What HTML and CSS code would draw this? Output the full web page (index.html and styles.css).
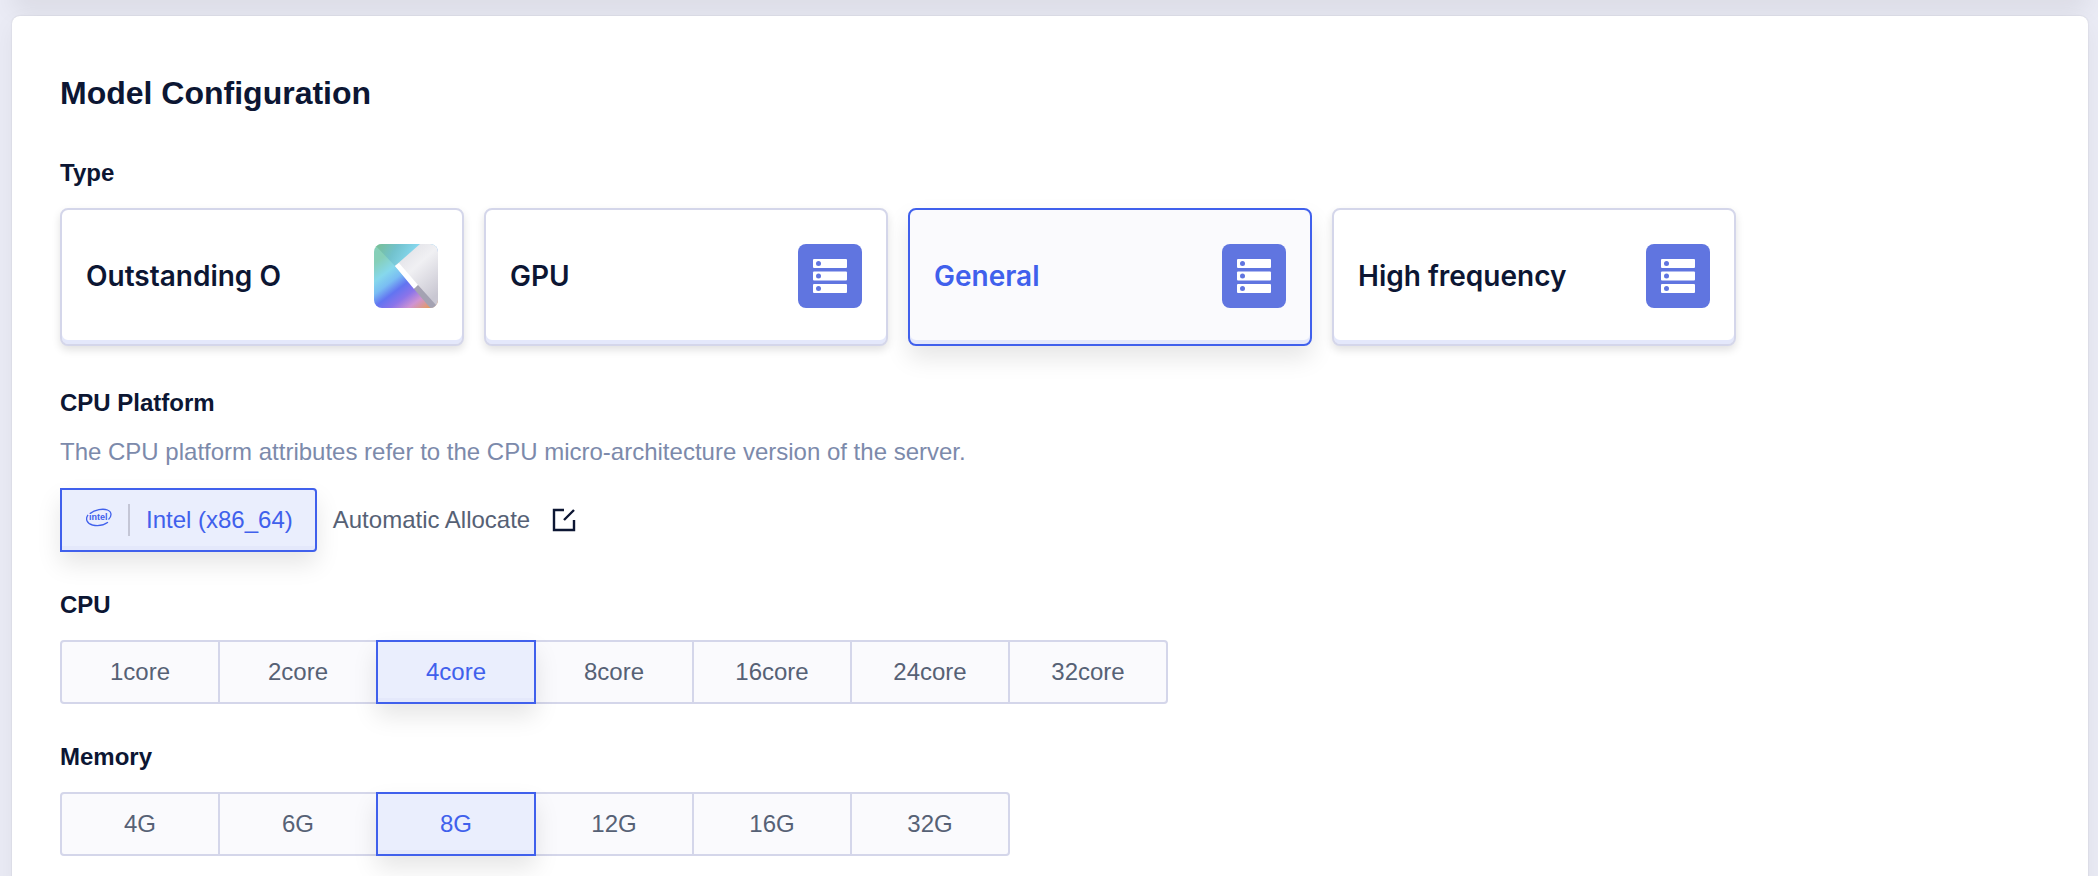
FILE: index.html
```html
<!DOCTYPE html>
<html lang="en">
<head>
<meta charset="utf-8">
<title>Model Configuration</title>
<link rel="stylesheet" href="styles.css">
</head>
<body>
<svg width="0" height="0" class="defs" aria-hidden="true">
  <symbol id="server" viewBox="0 0 64 64">
    <rect width="64" height="64" rx="8" fill="#6075e0"/>
    <g fill="#fff">
      <rect x="15" y="15" width="34" height="9" rx="1"/>
      <rect x="15" y="27.500" width="34" height="9" rx="1"/>
      <rect x="15" y="40" width="34" height="9" rx="1"/>
    </g>
    <g fill="#6075e0">
      <circle cx="20.500" cy="19.500" r="2.500"/>
      <circle cx="20.500" cy="32" r="2.500"/>
      <circle cx="20.500" cy="44.500" r="2.500"/>
    </g>
  </symbol>
</svg>
<div class="previous-panel"></div>
<main class="panel">
  <h1 class="title">Model Configuration</h1>

  <section class="group group-types">
    <h2 class="label">Type</h2>
    <div class="types">
      <button class="type" type="button">Outstanding O
        <svg class="type-icon" viewBox="0 0 64 64" aria-hidden="true">
          <defs>
            <clipPath id="tile"><rect width="64" height="64" rx="8"/></clipPath>
            <linearGradient id="spectrum" gradientUnits="userSpaceOnUse" x1="2" y1="18" x2="46" y2="76">
              <stop offset="0" stop-color="#86cfb8"/>
              <stop offset=".2" stop-color="#86d8ec"/>
              <stop offset=".34" stop-color="#79bdf3"/>
              <stop offset=".48" stop-color="#6274f1"/>
              <stop offset=".62" stop-color="#8a74ea"/>
              <stop offset=".77" stop-color="#cf93d2"/>
              <stop offset=".94" stop-color="#e39a62"/>
            </linearGradient>
            <linearGradient id="sky" gradientUnits="userSpaceOnUse" x1="4" y1="0" x2="34" y2="18">
              <stop offset="0" stop-color="#78bf97"/>
              <stop offset=".5" stop-color="#72c2cd"/>
              <stop offset="1" stop-color="#86d7ee"/>
            </linearGradient>
            <linearGradient id="silver" gradientUnits="userSpaceOnUse" x1="30" y1="8" x2="66" y2="48">
              <stop offset="0" stop-color="#e3e3e8"/>
              <stop offset=".35" stop-color="#f0f0f3"/>
              <stop offset="1" stop-color="#c9c7d2"/>
            </linearGradient>
          </defs>
          <g clip-path="url(#tile)">
            <rect width="64" height="64" fill="url(#spectrum)"/>
            <path d="M0 0H47L21 22Z" fill="url(#sky)"/>
            <path d="M46 0H64V64H58L21 22Z" fill="url(#silver)"/>
            <path d="M21 22L25 19L44 41L40 45Z" fill="#fff"/>
            <path d="M44 41L62 61L58 66L40 45Z" fill="#a4a2b2"/>
          </g>
        </svg>
      </button>
      <button class="type" type="button">GPU
        <svg class="type-icon" aria-hidden="true"><use href="#server"/></svg>
      </button>
      <button class="type type-selected" type="button" aria-pressed="true">General
        <svg class="type-icon" aria-hidden="true"><use href="#server"/></svg>
      </button>
      <button class="type" type="button">High frequency
        <svg class="type-icon" aria-hidden="true"><use href="#server"/></svg>
      </button>
    </div>
  </section>

  <section class="group">
    <h2 class="label">CPU Platform</h2>
    <p class="hint">The CPU platform attributes refer to the CPU micro-architecture version of the server.</p>
    <div class="platforms">
      <button class="platform" type="button" aria-pressed="true">
        <svg class="intel" viewBox="0 0 26 24" aria-hidden="true">
          <path d="M4 5.500C9 1.500 17 .4 21.500 2C26.500 4 25.500 9 22.500 11.500M2 6.800C-1 11 1 15.500 6.500 17C12 18.300 18 17 22 14.200" fill="none" stroke="#4060ec" stroke-width="1.300"/>
          <text x="3" y="12" class="intel-word">intel</text>
        </svg>
        <span class="platform-name">Intel (x86_64)</span>
      </button>
      <span class="allocate">Automatic Allocate</span>
      <button class="edit" type="button" aria-label="Edit platform">
        <svg class="edit-icon" viewBox="0 0 24 24" aria-hidden="true">
          <path d="M12 2H2V22H22V12M12 12L22 2" fill="none" stroke="#0c1633" stroke-width="2.400"/>
        </svg>
      </button>
    </div>
  </section>

  <section class="group">
    <h2 class="label">CPU</h2>
    <div class="options">
      <button class="option" type="button">1core</button>
      <button class="option" type="button">2core</button>
      <button class="option option-selected" type="button" aria-pressed="true">4core</button>
      <button class="option" type="button">8core</button>
      <button class="option" type="button">16core</button>
      <button class="option" type="button">24core</button>
      <button class="option" type="button">32core</button>
    </div>
  </section>

  <section class="group">
    <h2 class="label">Memory</h2>
    <div class="options">
      <button class="option" type="button">4G</button>
      <button class="option" type="button">6G</button>
      <button class="option option-selected" type="button" aria-pressed="true">8G</button>
      <button class="option" type="button">12G</button>
      <button class="option" type="button">16G</button>
      <button class="option" type="button">32G</button>
    </div>
  </section>
</main>
</body>
</html>
```
FILE: styles.css
```css
* {
  box-sizing: border-box;
}

html {
  height: 100%;
  overflow: hidden;
}

body {
  margin: 0;
  height: 100%;
  padding: 0 10px 0 12px;
  overflow: hidden;
  background: #eaebf5;
  color: #0c1633;
  font-family: "Liberation Sans", Arial, sans-serif;
  font-size: 24px;
  line-height: 32px;
}

button {
  font: inherit;
  color: inherit;
  cursor: pointer;
}

.defs {
  position: absolute;
}

.previous-panel {
  height: 20px;
  margin-top: -20px;
  border-radius: 8px;
  background: #fff;
  box-shadow: 0 8px 24px rgba(0, 0, 0, 0.09);
}

.panel {
  margin-top: 16px;
  min-height: 100%;
  padding: 56px 48px 0;
  border-radius: 8px;
  background: #fff;
  box-shadow: 0 0 2px rgba(0, 0, 0, 0.12), 0 8px 24px rgba(0, 0, 0, 0.05);
}

.title {
  margin: 0 0 42px;
  font-size: 32px;
  line-height: 42px;
}

.group {
  margin-bottom: 36px;
}

.group-types {
  margin-bottom: 40px;
}

.group:last-child {
  margin-bottom: 0;
}

.label {
  margin: 0 0 18px;
  font-size: 24px;
  line-height: 34px;
}

.types {
  display: flex;
  gap: 20px;
}

.type {
  display: flex;
  align-items: center;
  justify-content: space-between;
  width: 404px;
  height: 138px;
  padding: 0 24px 2px;
  border: 2px solid #d4d6ea;
  border-radius: 8px;
  background: #fff;
  box-shadow: inset 0 -4px #e4e8fb, 0 4px 8px rgba(0, 0, 0, 0.12);
  font-family: Inter, sans-serif;
  font-size: 28px;
  font-weight: 600;
}

.type-selected {
  border-color: #4060ec;
  background: #fafafd;
  box-shadow: inset 0 -4px #e4e8fb, 0 12px 24px rgba(0, 0, 0, 0.1);
  color: #4060ec;
}

.type-icon {
  width: 64px;
  height: 64px;
}

.hint {
  margin: 0 0 22px;
  color: #7c8aab;
  line-height: 28px;
}

.platforms {
  display: flex;
  align-items: center;
}

.platform {
  display: flex;
  align-items: center;
  height: 64px;
  padding: 0 22px 0 24px;
  border: 2px solid #4060ec;
  border-radius: 0 4px 4px 0;
  background: #eaeefd;
  box-shadow: inset 0 -4px #e4e8fb, 0 12px 24px rgba(0, 0, 0, 0.1);
  color: #4060ec;
}

.intel {
  width: 26px;
  height: 24px;
}

.intel-word {
  fill: #4060ec;
  font-size: 9px;
  font-weight: 700;
}

.platform-name {
  margin-left: 16px;
  padding-left: 16px;
  border-left: 2px solid #c4c6d6;
}

.allocate {
  margin-left: 16px;
  color: #566175;
}

.edit {
  display: flex;
  margin-left: 22px;
  padding: 0;
  border: 0;
  background: none;
}

.edit-icon {
  width: 24px;
  height: 24px;
}

.options {
  display: flex;
}

.option {
  width: 160px;
  height: 64px;
  padding: 0;
  border: 2px solid #d4d6ea;
  background: #fafafd;
  color: #566175;
}

.option + .option {
  margin-left: -2px;
}

.option:first-child {
  border-radius: 4px 0 0 4px;
}

.option:last-child {
  border-radius: 0 4px 4px 0;
}

.option-selected {
  z-index: 1;
  border-color: #4060ec;
  background: #eaeefd;
  box-shadow: inset 0 -4px #e4e8fb, 0 12px 24px rgba(0, 0, 0, 0.1);
  color: #4060ec;
}
```
